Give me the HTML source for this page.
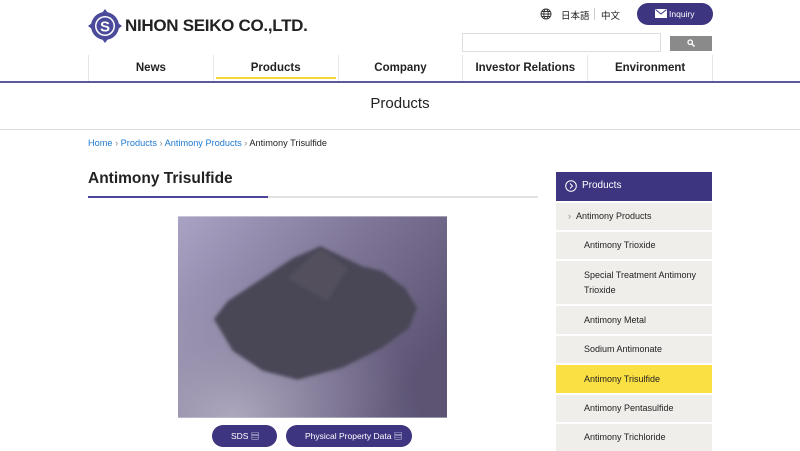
<!DOCTYPE html><html><head><style>
*{margin:0;padding:0;box-sizing:border-box}
body{width:800px;height:450px;overflow:hidden;background:#fff;font-family:"Liberation Sans","Noto Sans CJK JP",sans-serif;position:relative;color:#222}
.a{position:absolute}
.nav{top:55px;left:88px;width:625px;height:26px;display:flex}
.nav div{flex:1;border-left:1px solid #e6e6e6;text-align:center;font-weight:bold;font-size:11.5px;line-height:26px;position:relative}
.nav div:last-child{border-right:1px solid #e6e6e6}
.side div{position:absolute;left:556px;width:156px;background:#efeeeb;font-size:9px;padding-left:28px;display:flex;align-items:center;line-height:15px}
</style></head><body>
<svg class="a" style="left:88px;top:9px" width="34" height="34" viewBox="0 0 34 34"><circle cx="17" cy="17" r="14" fill="#4b4a9a"/><polygon points="17,0 20,4 14,4" fill="#4b4a9a"/><polygon points="17,34 20,30 14,30" fill="#4b4a9a"/><polygon points="0,17 4,20 4,14" fill="#4b4a9a"/><polygon points="34,17 30,20 30,14" fill="#4b4a9a"/><circle cx="17" cy="17" r="10" fill="#fff"/><circle cx="17" cy="17" r="8.5" fill="#4b4a9a"/><text x="17" y="22.5" text-anchor="middle" font-size="15" font-weight="bold" fill="#fff" font-family="Liberation Sans">S</text></svg>
<div class="a" style="left:125px;top:16px;font-size:17px;font-weight:bold;letter-spacing:-0.3px">NIHON SEIKO CO.,LTD.</div>
<svg class="a" style="left:540px;top:8px" width="12" height="12" viewBox="0 0 12 12" fill="none" stroke="#333" stroke-width="0.9"><circle cx="6" cy="6" r="5"/><ellipse cx="6" cy="6" rx="2.2" ry="5"/><path d="M1 6h10M2 3.5h8M2 8.5h8"/></svg>
<div class="a" style="left:561px;top:8px;font-size:9.5px">日本語</div>
<div class="a" style="left:594px;top:8px;width:1px;height:12px;background:#ccc"></div>
<div class="a" style="left:601px;top:8px;font-size:9.5px">中文</div>
<div class="a" style="left:637px;top:3px;width:76px;height:22px;border-radius:11px;background:#3d3580;color:#fff;font-size:8.5px;line-height:22px;padding-left:32px">Inquiry</div>
<svg class="a" style="left:655px;top:9px" width="12" height="9" viewBox="0 0 12 9"><rect width="12" height="9" fill="#fff"/><path d="M0.5 0.5L6 5L11.5 0.5" stroke="#3d3580" fill="none"/></svg>
<div class="a" style="left:462px;top:33px;width:199px;height:19px;border:1px solid #ddd"></div>
<div class="a" style="left:670px;top:36px;width:42px;height:15px;background:#8a8a8a"></div>
<svg class="a" style="left:687px;top:39px" width="8" height="8" viewBox="0 0 8 8"><circle cx="3.2" cy="3.2" r="2.2" stroke="#fff" stroke-width="1.3" fill="none"/><path d="M5 5L7.5 7.5" stroke="#fff" stroke-width="1.5"/></svg>
<div class="a nav"><div>News</div><div>Products<span class="a" style="left:2px;right:2px;bottom:2px;height:2px;background:#f4d935"></span></div><div>Company</div><div>Investor Relations</div><div>Environment</div></div>
<div class="a" style="left:0;top:81px;width:800px;height:2px;background:#5d5a9a"></div>
<div class="a" style="left:0;top:129px;width:800px;height:1px;background:#ddd"></div>
<div class="a" style="left:0;top:95px;width:800px;text-align:center;font-size:15px">Products</div>
<div class="a" style="left:88px;top:138px;font-size:9.2px;color:#1e7ad1">Home <span style="color:#888">›</span> Products <span style="color:#888">›</span> Antimony Products <span style="color:#888">›</span> <span style="color:#222">Antimony Trisulfide</span></div>
<div class="a" style="left:88px;top:170px;font-size:15.5px;font-weight:bold">Antimony Trisulfide</div>
<div class="a" style="left:88px;top:196px;width:450px;height:2px;background:#e2e2e2"></div>
<div class="a" style="left:88px;top:196px;width:180px;height:2px;background:#4a4594"></div>
<svg class="a" style="left:178px;top:216px" width="269" height="202" viewBox="0 0 270 202">
<defs><linearGradient id="g" x1="0" y1="0" x2="1" y2="0.6"><stop offset="0" stop-color="#aaa3c4"/><stop offset="0.55" stop-color="#7e7596"/><stop offset="1" stop-color="#5d5474"/></linearGradient>
<radialGradient id="h" cx="0.2" cy="1" r="0.7"><stop offset="0" stop-color="#b2adc2" stop-opacity="0.9"/><stop offset="1" stop-color="#9a94ad" stop-opacity="0"/></radialGradient>
<filter id="b"><feGaussianBlur stdDeviation="1.5"/></filter></defs>
<rect width="270" height="202" fill="url(#g)"/><rect width="270" height="202" fill="url(#h)"/>
<polygon points="143,30 160,38 185,50 205,55 228,72 240,92 232,112 205,132 165,152 120,164 85,155 55,135 36,103 50,85 85,62 115,42" fill="#4a4756" filter="url(#b)"/>
<polygon points="143,32 170,52 150,85 110,62" fill="#52505d" filter="url(#b)"/>
</svg>
<div class="a" style="left:212px;top:425px;width:65px;height:22px;border-radius:11px;background:#3d3580;color:#fff;font-size:8.5px;line-height:22px;padding-left:19px">SDS ▤</div>
<div class="a" style="left:286px;top:425px;width:126px;height:22px;border-radius:11px;background:#3d3580;color:#fff;font-size:8.5px;line-height:22px;padding-left:19px">Physical Property Data ▤</div>
<div class="a" style="left:556px;top:172px;width:156px;height:29px;background:#3d3580;color:#fff;font-size:10px;line-height:28px;padding-left:26px">Products</div>
<svg class="a" style="left:565px;top:180px" width="12" height="12" viewBox="0 0 12 12" fill="none" stroke="#fff"><circle cx="6" cy="6" r="5.3"/><path d="M5 3.5L7.5 6L5 8.5"/></svg>
<div class="side">
<div style="top:203px;height:27px;padding-left:12px"><span style="color:#888;margin-right:5px">›</span>Antimony Products</div>
<div style="top:232px;height:27px">Antimony Trioxide</div>
<div style="top:261px;height:43px">Special Treatment Antimony<br>Trioxide</div>
<div style="top:306px;height:28px">Antimony Metal</div>
<div style="top:336px;height:27px">Sodium Antimonate</div>
<div style="top:365px;height:28px;background:#fbe043">Antimony Trisulfide</div>
<div style="top:395px;height:27px">Antimony Pentasulfide</div>
<div style="top:424px;height:27px">Antimony Trichloride</div>
</div>
</body></html>
